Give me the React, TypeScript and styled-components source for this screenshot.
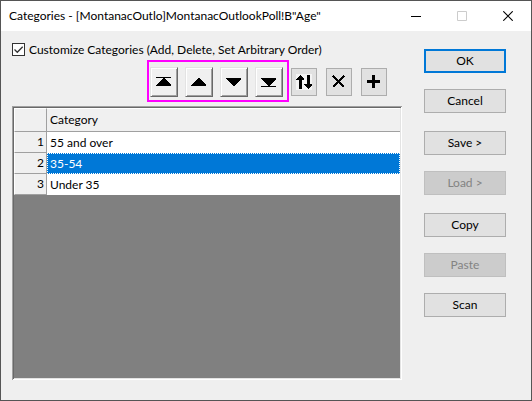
import React, { useState } from "react";
import styled, { createGlobalStyle, css } from "styled-components";

const GlobalStyle = createGlobalStyle`
  *, *::before, *::after { box-sizing: border-box; }
  body {
    margin: 0;
    background: #555;
    color: #000;
    font: 12px/16px Lato, "Open Sans", sans-serif;
  }
  button, input { font: inherit; color: inherit; }
`;

const Dialog = styled.main`
  display: flex;
  flex-direction: column;
  min-height: 100vh;
  border: 1px solid #555;
  background: #efefef;
`;

const TitleBar = styled.header`
  display: flex;
  align-items: center;
  justify-content: space-between;
  height: 30px;
  padding-left: 8px;
  background: #fff;
`;

const Title = styled.h1`
  margin: 0;
  font-size: 12px;
  font-weight: 400;
  white-space: nowrap;
`;

const WindowControls = styled.div`
  display: flex;
`;

const WindowButton = styled.button`
  display: grid;
  place-items: center;
  width: 46px;
  height: 30px;
  padding: 0;
  border: 0;
  background: transparent;
`;

const Body = styled.div`
  flex: 1;
  display: flex;
  gap: 22px;
  padding: 10px 25px 20px 11px;
`;

const Main = styled.section`
  flex: 1;
  min-width: 0;
  display: flex;
  flex-direction: column;
`;

const CheckLabel = styled.label`
  display: flex;
  align-items: center;
  gap: 4px;
  height: 17px;
  white-space: nowrap;
`;

const Checkbox = styled.input`
  appearance: none;
  flex: none;
  width: 13px;
  height: 13px;
  margin: 0;
  border: 1px solid #333;
  background: #fff;

  &:checked {
    background: #fff
      url("data:image/svg+xml,%3Csvg xmlns='http://www.w3.org/2000/svg' viewBox='0 0 11 11'%3E%3Cpath d='M1.5 5.5 4.3 8.3 9.7 2.7' fill='none' stroke='%23333' stroke-width='1.3'/%3E%3C/svg%3E")
      center / 11px 11px no-repeat;
  }
`;

const Toolbar = styled.div`
  display: flex;
  align-items: center;
  gap: 2px;
  margin: 2px 0 4px;
  padding-right: 15px;
  justify-content: flex-end;
`;

const MoveGroup = styled.div`
  display: flex;
  gap: 7px;
  height: 42px;
  padding: 5px 4px 0 1px;
  border: 2px solid #ff00ff;
`;

const ToolButton = styled.button<{ $raised?: boolean }>`
  display: grid;
  place-items: center;
  padding: 0;
  ${(p) =>
    p.$raised
      ? css`
          width: 28px;
          height: 30px;
          border: 1px solid;
          border-color: #e3e3e3 #696969 #696969 #e3e3e3;
          box-shadow: inset 1px 1px #fff, inset -1px -1px #a0a0a0;
          background: #f0f0f0;
        `
      : css`
          width: 26px;
          height: 28px;
          border: 1px solid #adadad;
          background: #e1e1e1;
        `}
`;

const EditGroup = styled.div`
  display: flex;
  gap: 9px;
  padding-top: 2px;
`;

const GridFrame = styled.div`
  flex: 1;
  padding: 2px;
  border: 0 solid;
  box-shadow: inset 1px 1px #a0a0a0, inset -1px -1px #fff, inset 2px 2px #696969, inset -2px -2px #e3e3e3;
  background: #808080;
`;

const Table = styled.table`
  width: 100%;
  border-collapse: separate;
  border-spacing: 0;
  table-layout: fixed;

  th, td {
    height: 21px;
    padding: 0 3px;
    font-weight: 400;
    text-align: left;
  }
  thead th {
    height: 24px;
    border-bottom: 1px solid #a0a0a0;
    border-top: 1px solid #fff;
    background: #f0f0f0;
  }
  th:first-child {
    width: 33px;
    padding: 0 2px;
    border-left: 1px solid #fff;
    border-right: 1px solid #a0a0a0;
    border-bottom: 1px solid #a0a0a0;
    background: #f0f0f0;
    text-align: right;
  }
`;

const CategoryRow = styled.tr<{ $selected: boolean }>`
  td {
    background: ${(p) => (p.$selected ? "#0078d7" : "#fff")};
    color: ${(p) => (p.$selected ? "#fff" : "#000")};
    outline: ${(p) => (p.$selected ? "1px dotted #fff" : "none")};
    outline-offset: -1px;
  }
`;

const Actions = styled.aside`
  display: flex;
  flex-direction: column;
  gap: 18px;
  width: 82px;
  padding-top: 8px;
`;

const ActionGroup = styled.div`
  display: flex;
  flex-direction: column;
  gap: 16px;
`;

const ActionButton = styled.button<{ $primary?: boolean }>`
  height: 24px;
  padding: 0 0 1px;
  border: ${(p) => (p.$primary ? "2px solid #0078d7" : "1px solid #adadad")};
  background: #e1e1e1;

  &:disabled {
    border-color: #bfbfbf;
    background: #ccc;
    color: #838383;
  }
`;

const Glyph = ({ children }: { children: React.ReactNode }) => (
  <svg width="16" height="16" viewBox="0 0 16 16" shapeRendering="crispEdges" aria-hidden="true">
    {children}
  </svg>
);

const moves = [
  { label: "Move to top", d: "M0 3h15v1H0zM7 4h1l7 7v1H0v-1z" },
  { label: "Move up", d: "M7 4h1l7 7v1H0v-1z" },
  { label: "Move down", d: "M0 4h15v1l-7 7H7L0 5z" },
  { label: "Move to bottom", d: "M0 4h15v1l-7 7H7L0 5zM0 12h15v1H0z" },
];

const categories = ["55 and over", "35-54", "Under 35"];

export default function App() {
  const [customize, setCustomize] = useState(true);
  const [selected, setSelected] = useState(1);

  return (
    <>
      <GlobalStyle />
      <Dialog>
        <TitleBar>
          <Title>Categories - [MontanacOutlo]MontanacOutlookPoll!B"Age"</Title>
          <WindowControls>
            <WindowButton aria-label="Minimize">
              <svg width="10" height="10"><path d="M0 5.5h10" stroke="#000" /></svg>
            </WindowButton>
            <WindowButton aria-label="Maximize" disabled>
              <svg width="10" height="10"><path d="M.5.5h9v9h-9z" fill="none" stroke="#ccc" /></svg>
            </WindowButton>
            <WindowButton aria-label="Close">
              <svg width="10" height="10"><path d="m.3.3 9.4 9.4M9.7.3.3 9.7" stroke="#000" strokeWidth="1.1" /></svg>
            </WindowButton>
          </WindowControls>
        </TitleBar>
        <Body>
          <Main>
            <CheckLabel>
              <Checkbox type="checkbox" checked={customize} onChange={(e) => setCustomize(e.target.checked)} />
              Customize Categories (Add, Delete, Set Arbitrary Order)
            </CheckLabel>
            <Toolbar>
              <MoveGroup>
                {moves.map((m) => (
                  <ToolButton key={m.label} $raised aria-label={m.label}>
                    <Glyph><path d={m.d} /></Glyph>
                  </ToolButton>
                ))}
              </MoveGroup>
              <EditGroup>
                <ToolButton aria-label="Reverse order">
                  <Glyph>
                    <path fill="#f4f4f4" d="M0 0h16v16H0z" />
                    <path d="M4 1h1l3 4v1H6v9H3V6H0V5zM11 1h3v9h2v1l-3 4h-1l-4-4v-1h3z" />
                  </Glyph>
                </ToolButton>
                <ToolButton aria-label="Delete">
                  <Glyph><path d="M2 2l11 11M13 2L2 13" stroke="#000" strokeWidth="2.6" /></Glyph>
                </ToolButton>
                <ToolButton aria-label="Add">
                  <Glyph><path d="M6 1h3v5h5v3H9v5H6V9H1V6h5z" /></Glyph>
                </ToolButton>
              </EditGroup>
            </Toolbar>
            <GridFrame>
              <Table>
                <thead>
                  <tr><th aria-label="Number" /><th>Category</th></tr>
                </thead>
                <tbody>
                  {categories.map((name, i) => (
                    <CategoryRow key={name} $selected={i === selected} onClick={() => setSelected(i)}>
                      <th scope="row">{i + 1}</th>
                      <td>{name}</td>
                    </CategoryRow>
                  ))}
                </tbody>
              </Table>
            </GridFrame>
          </Main>
          <Actions>
            <ActionGroup>
              <ActionButton $primary>OK</ActionButton>
              <ActionButton>Cancel</ActionButton>
            </ActionGroup>
            <ActionGroup>
              <ActionButton>Save &gt;</ActionButton>
              <ActionButton disabled>Load &gt;</ActionButton>
            </ActionGroup>
            <ActionGroup>
              <ActionButton>Copy</ActionButton>
              <ActionButton disabled>Paste</ActionButton>
              <ActionButton>Scan</ActionButton>
            </ActionGroup>
          </Actions>
        </Body>
      </Dialog>
    </>
  );
}
